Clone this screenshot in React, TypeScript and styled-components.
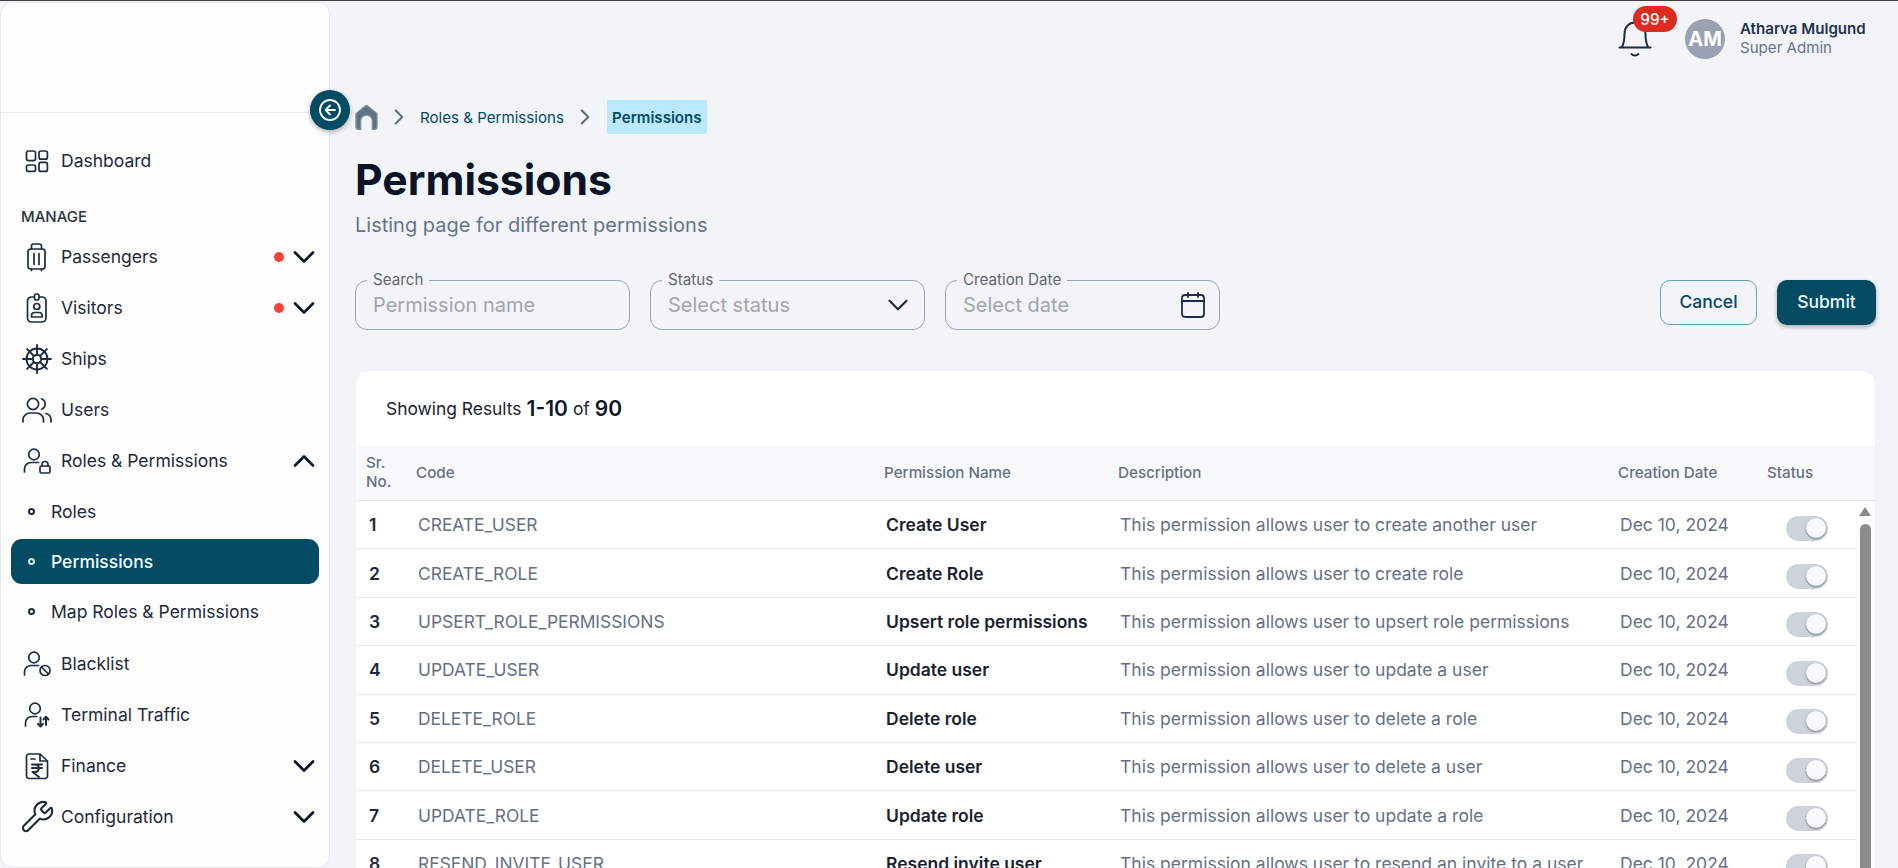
import React from "react";
import styled, { createGlobalStyle } from "styled-components";
import { ChevronDown, ChevronUp, ChevronRight, Wrench } from "lucide-react";

const Global = createGlobalStyle`
  html, body { margin: 0; padding: 0; height: 100%; overflow: hidden; background: #f3f4f8; }
  * { box-sizing: border-box; }
  body { font-family: Inter, "Liberation Sans", sans-serif; }
`;

const Page = styled.div`
  width: 1898px; height: 868px; display: flex; overflow: hidden;
  border-top: 1px solid #3f3f3f; background: #f3f4f8; position: relative;
`;
const Side = styled.aside`
  width: 330px; height: 866px; margin: 1px 0 0 0; flex: none; background: #fdfdfe;
  border: 1px solid #e6e8ee; border-radius: 12px; display: flex; flex-direction: column; position: relative;
`;
const Logo = styled.div`height: 110px; flex: none; border-bottom: 1px solid #e8eaf1;`;
const Collapse = styled.button`
  position: absolute; left: 309px; top: 87px; width: 40px; height: 40px; border-radius: 50%;
  border: 0; padding: 0; background: #034a63; color: #fff; display: flex; align-items: center; justify-content: center;
  box-shadow: 0 2px 5px rgba(0,0,0,.3); z-index: 3;
`;
const Nav = styled.nav`display: flex; flex-direction: column; padding: 22px 10px 0 10px;`;
const Item = styled.div`
  height: 51px; flex: none; display: flex; align-items: center; padding: 0 5px 0 10px; color: #1e293b; font-size: 17.5px;
`;
const IconBox = styled.span`
  width: 32px; height: 32px; display: flex; align-items: center; justify-content: center; flex: none; margin-right: 8px; color: #1f2b40;
  svg { flex: none; }
`;
const ItemLabel = styled.span`flex: 1;`;
const Dot = styled.span`width: 10px; height: 10px; border-radius: 50%; background: #f44336; margin-right: 2px;`;
const ChevBox = styled.span`display: flex; width: 36px; height: 36px; margin: -8px -8px -8px 0; color: #0f172a;`;
const Section = styled.div`height: 30px; margin-top: 15px; padding-left: 10px; display: flex; align-items: center; font-size: 15px; font-weight: 500; color: #2a3340;`;
const SubList = styled.div`display: flex; flex-direction: column; margin-bottom: 2px;`;
const SubItem = styled.div<{ $active?: boolean }>`
  height: 45px; margin: 2.5px 0; width: 308px; flex: none; display: flex; align-items: center;
  padding-left: 17px; border-radius: 11px; font-size: 17.5px;
  color: ${p => (p.$active ? "#f4fbff" : "#1e293b")}; background: ${p => (p.$active ? "#034a63" : "transparent")};
  font-weight: ${p => (p.$active ? 500 : 400)};
`;
const Bullet = styled.span<{ $active?: boolean }>`
  width: 7px; height: 7px; border-radius: 50%; border: 2px solid ${p => (p.$active ? "#d6e3d9" : "#1e293b")}; margin-right: 16px; flex: none;
`;

const Main = styled.main`flex: 1; min-width: 0; padding: 0 22px 0 25px; display: flex; flex-direction: column;`;
const Top = styled.div`height: 64px; flex: none; display: flex; justify-content: flex-end; align-items: flex-start; padding: 18px 10px 0 0;`;
const BellWrap = styled.div`position: relative; width: 34px; height: 36px; margin: 2px 33px 0 0; color: #1f2b40;`;
const Badge = styled.span`
  position: absolute; left: 15px; top: -15px; height: 26px; width: 44px; border-radius: 13px; background: #dc2c22;
  color: #fff; font-size: 15.3px; font-weight: 500; display: flex; align-items: center; justify-content: center;
`;
const Avatar = styled.div`
  width: 40px; height: 40px; border-radius: 50%; background: #98a2b3; color: #fff; font-weight: 700; font-size: 20px;
  display: flex; align-items: center; justify-content: center; margin-right: 15px;
`;
const UserBox = styled.div`display: flex; flex-direction: column; width: 126px; white-space: nowrap;`;
const UserName = styled.div`font-size: 15.1px; font-weight: 600; color: #1e3350; line-height: 19px;`;
const UserRole = styled.div`font-size: 15.1px; color: #64748b; line-height: 19px;`;

const Crumbs = styled.div`height: 34px; margin-top: 35px; display: flex; align-items: center; color: #034a63; font-size: 15.1px;`;
const CrumbSep = styled.span`display: flex; color: #5f6f7f; margin: 0 8px 0 8px;`;
const CrumbNow = styled.span`background: #bae9ff; border-radius: 2px; height: 34px; width: 100px; margin-left: 1px; justify-content: center; display: flex; align-items: center; font-weight: 600; padding-top: 1px;`;
const Title = styled.h1`margin: 18px 0 0; font-size: 42.7px; font-weight: 700; line-height: 56px; color: #0b1426;`;
const Sub = styled.p`margin: 3px 0 0; font-size: 20px; line-height: 28px; color: #64748b;`;

const Filters = styled.div`display: flex; margin-top: 41px; align-items: flex-start; height: 50px;`;
const Field = styled.div`
  position: relative; width: 275px; height: 50px; margin-right: 20px; border: 1px solid #98a2b8; border-radius: 12px;
  display: flex; align-items: center; justify-content: space-between; padding: 0 14px 0 17px;
  color: #a3a5a8; font-size: 20px;
`;
const FieldLabel = styled.span`
  position: absolute; left: 11px; top: -10px; background: #f3f4f8; padding: 0 6px; font-size: 15.2px; line-height: 18px; color: #64666e;
`;
const Spacer = styled.div`flex: 1;`;
const Btn = styled.button<{ $primary?: boolean }>`
  height: 45px; border-radius: 10px; font-family: inherit; font-size: 17.5px; font-weight: 500; padding: 0 0 2px;
  width: ${p => (p.$primary ? "99px" : "97px")}; margin-left: ${p => (p.$primary ? "20px" : "0")};
  border: ${p => (p.$primary ? "0" : "1px solid #6c9db0")};
  background: ${p => (p.$primary ? "#034a63" : "transparent")}; color: ${p => (p.$primary ? "#eaf9ff" : "#034a63")};
  box-shadow: ${p => (p.$primary ? "0 2px 4px rgba(0,0,0,.3)" : "none")};
`;

const Card = styled.section`
  margin: 41px 0 0 1px; width: 1519px; flex: none; height: 600px; background: #fff; border-radius: 12px; overflow: hidden;
  box-shadow: 0 0 1px rgba(0,0,0,.1); position: relative;
`;
const Results = styled.div`height: 75px; padding: 0 0 1px 30px; display: flex; align-items: center; gap: 5px; font-size: 17.4px; color: #1a2230;`;
const Strong = styled.b`font-size: 21px; font-weight: 600; color: #0f172a;`;
const Cols = "50px 468px 234px 500px 149px 1fr";
const Head = styled.div`
  display: grid; grid-template-columns: ${Cols}; height: 55px; align-items: center; background: #f8f9fb; border-bottom: 1px solid #e2e5ea;
  font-size: 15.2px; color: #667085; font-weight: 500; line-height: 19px; padding: 0 0 2px 10px;
`;
const HeadCell = styled.div``;
const Body = styled.div`display: flex;`;
const Rows = styled.div`width: 1500px; flex: none;`;
const Row = styled.div`
  display: grid; grid-template-columns: ${Cols}; height: 48.4px; align-items: center; border-bottom: 1px solid #e4e6ea;
  padding-left: 10px; font-size: 17.5px; color: #667085;
`;
const Num = styled.div`padding-left: 3px; color: #1e293b; font-weight: 600;`;
const Code = styled.div`padding-left: 2px; white-space: nowrap; font-size: 17.4px;`;
const Cell = styled.div`padding-left: 2px; white-space: nowrap;`;
const Name = styled.div`padding-left: 2px; color: #1a2230; font-weight: 600; white-space: nowrap;`;
const Toggle = styled.div`
  margin-left: 19px; margin-top: 7px; width: 42px; height: 25px; border-radius: 13px; background: #cdd2dc; position: relative;
`;
const Knob = styled.span`
  position: absolute; right: 2px; top: 2px; width: 20px; height: 20px; border-radius: 50%; background: #f8f9fb; box-shadow: 0 1px 2px rgba(0,0,0,.45);
`;
const Scroll = styled.div`flex: 1; display: flex; flex-direction: column; align-items: flex-start; padding: 6px 0 0 4px; background: #fbfbfb;`;
const ScrollUp = styled.span`width: 0; height: 0; border-left: 6.5px solid transparent; border-right: 6.5px solid transparent; border-bottom: 9px solid #8b8b8b; margin: 0 0 8px -1px;`;
const Thumb = styled.span`width: 11px; flex: 1; border-radius: 6px 6px 0 0; background: #8c8c8c;`;
const SelectChev = styled.span`display: flex; margin: -8px -5px -8px 0; color: #1f2b40;`;

const S = { fill: "none", stroke: "currentColor", strokeWidth: 1.7, strokeLinecap: "round" as const, strokeLinejoin: "round" as const };

const Dash = () => (
  <svg width="24" height="24" viewBox="0 0 24 24" {...S}>
    <rect x="1.500" y="2" width="9" height="9.600" rx="2" /><rect x="14" y="2" width="8.400" height="8.200" rx="2" />
    <rect x="1.500" y="16" width="9" height="6.400" rx="2" /><rect x="14" y="13.400" width="8.400" height="9" rx="2" />
  </svg>
);
const Bag = () => (
  <svg width="28" height="30" viewBox="0 0 28 30" {...S}>
    <rect x="5" y="7" width="17" height="20" rx="2.500" /><path d="M8.500 7V4a2 2 0 0 1 2-2h6a2 2 0 0 1 2 2v3M11 11.500v11M16 11.500v11M8.500 27v1.600M18.500 27v1.600" />
  </svg>
);
const Badge2 = () => (
  <svg width="28" height="32" viewBox="0 0 28 32" {...S}>
    <rect x="4.500" y="5" width="18.500" height="25" rx="4" /><rect x="11.500" y="2" width="4.500" height="6" rx="2" fill="#fdfdfe" />
    <circle cx="13.800" cy="14.500" r="3" /><path d="M8.500 25v-1.500a3 3 0 0 1 3-3h4.600a3 3 0 0 1 3 3V25z" />
  </svg>
);
const Wheel = () => (
  <svg width="32" height="32" viewBox="0 0 32 32" {...S} strokeWidth="1.900">
    <circle cx="16" cy="16" r="10.500" /><circle cx="16" cy="16" r="4.200" />
    <path d="M16 2v9.800M16 20.200V30M2 16h9.800M20.200 16H30M6.100 6.100l6.900 6.900M19 19l6.900 6.900M25.900 6.100 19 13M13 19l-6.900 6.900" />
  </svg>
);
const People = () => (
  <svg width="32" height="28" viewBox="0 0 32 28" {...S}>
    <circle cx="12" cy="8" r="5.600" /><path d="M2 26v-2.500a7 7 0 0 1 7-6.500h6.500a7 7 0 0 1 7 6.500V26M20.500 2.800a5.600 5.600 0 0 1 0 10.500M25 17.500a6.500 6.500 0 0 1 5 6V26" />
  </svg>
);
const UserHead = () => (<><circle cx="12" cy="7.500" r="5.300" /><path d="M2.500 25v-3a6.500 6.500 0 0 1 6.500-6.500h7.500" /></>);
const UserLock = () => (
  <svg width="30" height="28" viewBox="0 0 30 28" {...S}>
    <UserHead /><rect x="18" y="19" width="10" height="7" rx="1.500" /><path d="M20 19v-1.500a3 3 0 0 1 6 0V19" />
  </svg>
);
const UserBan = () => (
  <svg width="30" height="28" viewBox="0 0 30 28" {...S}>
    <UserHead /><circle cx="23" cy="20.500" r="5" /><path d="M19.500 17l7 7" />
  </svg>
);
const UserSwap = () => (
  <svg width="30" height="28" viewBox="0 0 30 28" {...S}>
    <g transform="translate(1 0)"><circle cx="12" cy="7.500" r="5.300" /><path d="M2.500 25v-3a6.500 6.500 0 0 1 6.500-6.500h5" /></g>
    <path d="M18.500 16.500v9M16 22.800l2.500 2.800 2.500-2.800M24 24v-8M21.500 18.500l2.500-2.800 2.500 2.800" strokeWidth="2" />
  </svg>
);
const Rupee = () => (
  <svg width="26" height="30" viewBox="0 0 26 30" {...S}>
    <path d="M5 3h11l7.500 7v15a2.500 2.500 0 0 1-2.500 2.500H5A2.500 2.500 0 0 1 2.500 25V5.500A2.500 2.500 0 0 1 5 3zM16 3v7h7.500M7 8h4" />
    <path d="M8 13.500h10M8 17h10M11 13.500c5 0 5 7.500 0 7.500H8.500l6.500 5" strokeWidth="2" />
  </svg>
);
const Home = () => (
  <svg width="23" height="25" viewBox="0 0 23 25">
    <path fill="#5f7280" stroke="#7b919d" strokeWidth="1.400" strokeLinejoin="round" d="M10 1.300a2.400 2.400 0 0 1 3 0l8 6.400a2.400 2.400 0 0 1 1 2V22a2.400 2.400 0 0 1-2.400 2.400h-2.200V16a5.400 5.400 0 0 0-11.800 0v8.400H3.400A2.400 2.400 0 0 1 1 22V9.700a2.400 2.400 0 0 1 1-2z" />
  </svg>
);
const BackIcon = () => (
  <svg width="24" height="24" viewBox="0 0 24 24" fill="none" stroke="currentColor" strokeWidth="1.800" strokeLinecap="round" strokeLinejoin="round">
    <circle cx="12" cy="12" r="10" /><path d="M17 12H8M12 7.500 7.500 12l4.500 4.500" />
  </svg>
);
const BellIcon = () => (
  <svg width="34" height="36" viewBox="0 0 34 36" fill="none" stroke="currentColor" strokeWidth="2" strokeLinecap="round" strokeLinejoin="round">
    <path d="M1.500 26.500h31M3.500 26.500C6 23 6.500 18 6.500 13 6.500 6 11 1.500 17 1.500S27.500 6 27.500 13c0 5 .5 10 3 13.500M13.500 33c1.500 2 5.500 2 7 0" />
  </svg>
);
const CalIcon = () => (
  <svg width="24" height="26" viewBox="0 0 24 26" fill="none" stroke="#1f2b40" strokeWidth="1.800" strokeLinecap="round" strokeLinejoin="round">
    <rect x="1" y="3" width="22" height="22" rx="3" /><path d="M1 9h22M7 1v4M17 1v4" />
  </svg>
);

const rows: [string, string, string][] = [
  ["CREATE_USER", "Create User", "This permission allows user to create another user"],
  ["CREATE_ROLE", "Create Role", "This permission allows user to create role"],
  ["UPSERT_ROLE_PERMISSIONS", "Upsert role permissions", "This permission allows user to upsert role permissions"],
  ["UPDATE_USER", "Update user", "This permission allows user to update a user"],
  ["DELETE_ROLE", "Delete role", "This permission allows user to delete a role"],
  ["DELETE_USER", "Delete user", "This permission allows user to delete a user"],
  ["UPDATE_ROLE", "Update role", "This permission allows user to update a role"],
  ["RESEND_INVITE_USER", "Resend invite user", "This permission allows user to resend an invite to a user"],
];

const Chev = ({ up }: { up?: boolean }) => (
  <ChevBox>{up ? <ChevronUp size={36} strokeWidth={1.8} /> : <ChevronDown size={36} strokeWidth={1.8} />}</ChevBox>
);

const NavRow = ({ icon, label, dot, chev }: { icon: React.ReactNode; label: string; dot?: boolean; chev?: "up" | "down" }) => (
  <Item>
    <IconBox>{icon}</IconBox>
    <ItemLabel>{label}</ItemLabel>
    {dot && <Dot />}
    {chev && <Chev up={chev === "up"} />}
  </Item>
);

export default function App() {
  return (
    <Page>
      <Global />
      <Side>
        <Logo />
        <Collapse aria-label="Collapse"><BackIcon /></Collapse>
        <Nav>
          <NavRow icon={<Dash />} label="Dashboard" />
          <Section>MANAGE</Section>
          <NavRow icon={<Bag />} label="Passengers" dot chev="down" />
          <NavRow icon={<Badge2 />} label="Visitors" dot chev="down" />
          <NavRow icon={<Wheel />} label="Ships" />
          <NavRow icon={<People />} label="Users" />
          <NavRow icon={<UserLock />} label="Roles & Permissions" chev="up" />
          <SubList>
            <SubItem><Bullet />Roles</SubItem>
            <SubItem $active><Bullet $active />Permissions</SubItem>
            <SubItem><Bullet />Map Roles &amp; Permissions</SubItem>
          </SubList>
          <NavRow icon={<UserBan />} label="Blacklist" />
          <NavRow icon={<UserSwap />} label="Terminal Traffic" />
          <NavRow icon={<Rupee />} label="Finance" chev="down" />
          <NavRow icon={<Wrench size={35} strokeWidth={1.45} />} label="Configuration" chev="down" />
        </Nav>
      </Side>
      <Main>
        <Top>
          <BellWrap><BellIcon /><Badge>99+</Badge></BellWrap>
          <Avatar>AM</Avatar>
          <UserBox><UserName>Atharva Mulgund</UserName><UserRole>Super Admin</UserRole></UserBox>
        </Top>
        <Crumbs>
          <Home />
          <CrumbSep><ChevronRight size={26} strokeWidth={1.9} /></CrumbSep>
          <span>Roles &amp; Permissions</span>
          <CrumbSep><ChevronRight size={26} strokeWidth={1.9} /></CrumbSep>
          <CrumbNow>Permissions</CrumbNow>
        </Crumbs>
        <Title>Permissions</Title>
        <Sub>Listing page for different permissions</Sub>
        <Filters>
          <Field><FieldLabel>Search</FieldLabel>Permission name</Field>
          <Field><FieldLabel>Status</FieldLabel>Select status<SelectChev><ChevronDown size={34} strokeWidth={1.5} /></SelectChev></Field>
          <Field><FieldLabel>Creation Date</FieldLabel>Select date<CalIcon /></Field>
          <Spacer />
          <Btn>Cancel</Btn>
          <Btn $primary>Submit</Btn>
        </Filters>
        <Card>
          <Results>Showing Results <Strong>1-10</Strong> of <Strong>90</Strong></Results>
          <Head>
            <HeadCell>Sr.<br />No.</HeadCell>
            <HeadCell>Code</HeadCell>
            <HeadCell>Permission Name</HeadCell>
            <HeadCell>Description</HeadCell>
            <HeadCell>Creation Date</HeadCell>
            <HeadCell>Status</HeadCell>
          </Head>
          <Body>
            <Rows>
              {rows.map((r, i) => (
                <Row key={r[0]}>
                  <Num>{i + 1}</Num>
                  <Code>{r[0]}</Code>
                  <Name>{r[1]}</Name>
                  <Cell>{r[2]}</Cell>
                  <Cell>Dec 10, 2024</Cell>
                  <Toggle><Knob /></Toggle>
                </Row>
              ))}
            </Rows>
            <Scroll><ScrollUp /><Thumb /></Scroll>
          </Body>
        </Card>
      </Main>
    </Page>
  );
}
